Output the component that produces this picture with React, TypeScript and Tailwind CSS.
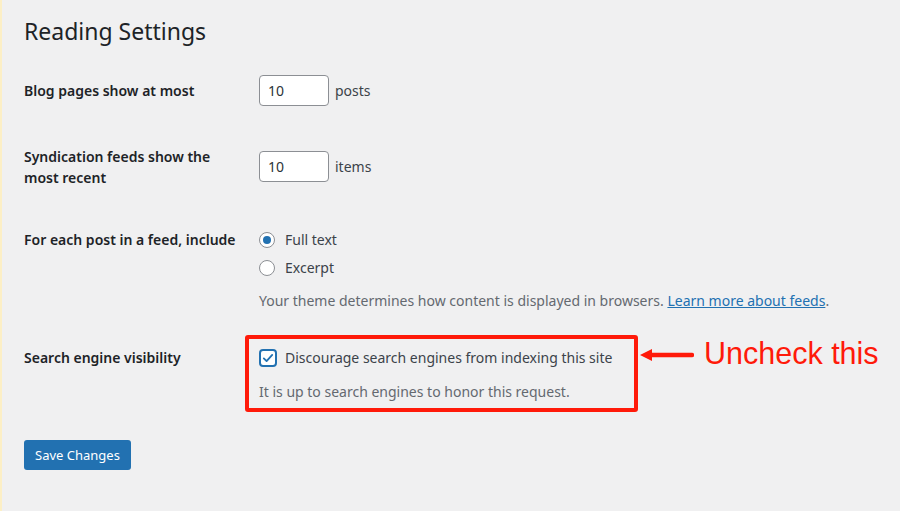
import React from 'react';

const font = { fontFamily: '"Noto Sans", "Open Sans", sans-serif' };

function Label({ children, pt }: { children: React.ReactNode; pt: string }) {
  return (
    <div className={`w-[235px] shrink-0 text-[14px] leading-[21px] font-semibold text-[#1d2327] ${pt}`}>
      {children}
    </div>
  );
}

function NumberField({ value, unit }: { value: string; unit: string }) {
  return (
    <div className="flex items-center gap-[6px]">
      <div className="w-[70px] h-[31px] bg-white border border-[#8c8f94] rounded-[4px] flex items-center px-[8px] text-[14px] text-[#2c3338]">
        {value}
      </div>
      <span className="text-[14px] text-[#3c434a]">{unit}</span>
    </div>
  );
}

function Radio({ checked, label }: { checked?: boolean; label: string }) {
  return (
    <div className="flex items-center gap-[10px] h-[21px] text-[14px] text-[#3c434a]">
      <span className="w-[16px] h-[16px] rounded-full border border-[#8c8f94] bg-white flex items-center justify-center">
        {checked && <span className="w-[8px] h-[8px] rounded-full bg-[#2271b1]" />}
      </span>
      {label}
    </div>
  );
}

export default function App() {
  return (
    <div className="w-[900px] h-[511px] bg-[#f0f0f1] border-l-2 border-[#fcefc6] overflow-hidden" style={font}>
      <div className="pl-[22px]">
        <h1 className="pt-[17px] text-[23px] leading-[29px] font-normal text-[#1d2327]">Reading Settings</h1>

        {/* Blog pages */}
        <div className="flex mt-[14px] pb-[15px]">
          <Label pt="pt-[20px]">Blog pages show at most</Label>
          <div className="pt-[15px]">
            <NumberField value="10" unit="posts" />
          </div>
        </div>

        {/* Syndication */}
        <div className="flex">
          <Label pt="pt-[25px]">
            Syndication feeds show the
            <br />
            most recent
          </Label>
          <div className="pt-[30px]">
            <NumberField value="10" unit="items" />
          </div>
        </div>

        {/* Feed content */}
        <div className="flex mt-[41px] pb-[24px]">
          <Label pt="pt-[0px]">For each post in a feed, include</Label>
          <div className="flex flex-col">
            <Radio checked label="Full text" />
            <div className="mt-[7px]">
              <Radio label="Excerpt" />
            </div>
            <p className="mt-[12px] text-[14px] leading-[21px] text-[#646970]">
              Your theme determines how content is displayed in browsers.{' '}
              <a className="text-[#2271b1] underline">Learn more about feeds</a>.
            </p>
          </div>
        </div>

        {/* Search engine visibility */}
        <div className="flex">
          <Label pt="pt-[12px]">Search engine visibility</Label>
          <div className="flex items-start -ml-[14px]">
            <div className="w-[393px] h-[77px] border-4 border-[#ff1a0a] rounded-[3px] pl-[10px] pt-[8px]">
              <div className="flex items-center gap-[8px] h-[21px] text-[14px] text-[#3c434a]">
                <span className="w-[18px] h-[18px] rounded-[4px] border-2 border-[#2271b1] bg-white flex items-center justify-center">
                  <svg width="14" height="14" viewBox="0 0 20 20" fill="none">
                    <path d="M4 10.5l4 4 8-9" stroke="#2271b1" strokeWidth="2.6" strokeLinecap="round" strokeLinejoin="round" />
                  </svg>
                </span>
                Discourage search engines from indexing this site
              </div>
              <p className="mt-[13px] text-[14px] leading-[21px] text-[#646970]">
                It is up to search engines to honor this request.
              </p>
            </div>
            <svg className="mt-[12px]" width="56" height="16" viewBox="0 0 56 16">
              <path d="M2 8 L14 2 L14 14 Z" fill="#ff1a0a" />
              <path d="M12 8 H54" stroke="#ff1a0a" strokeWidth="4.5" strokeLinecap="round" />
            </svg>
            <span
              className="ml-[10px] mt-[0px] text-[30.5px] leading-[36px] text-[#ff1a0a]"
              style={{ fontFamily: '"Liberation Sans", Arial, sans-serif' }}
            >
              Uncheck this
            </span>
          </div>
        </div>

        <button className="mt-[28px] h-[30px] w-[107px] rounded-[3px] bg-[#2271b1] text-white text-[13px] leading-[30px]">
          Save Changes
        </button>
      </div>
    </div>
  );
}
